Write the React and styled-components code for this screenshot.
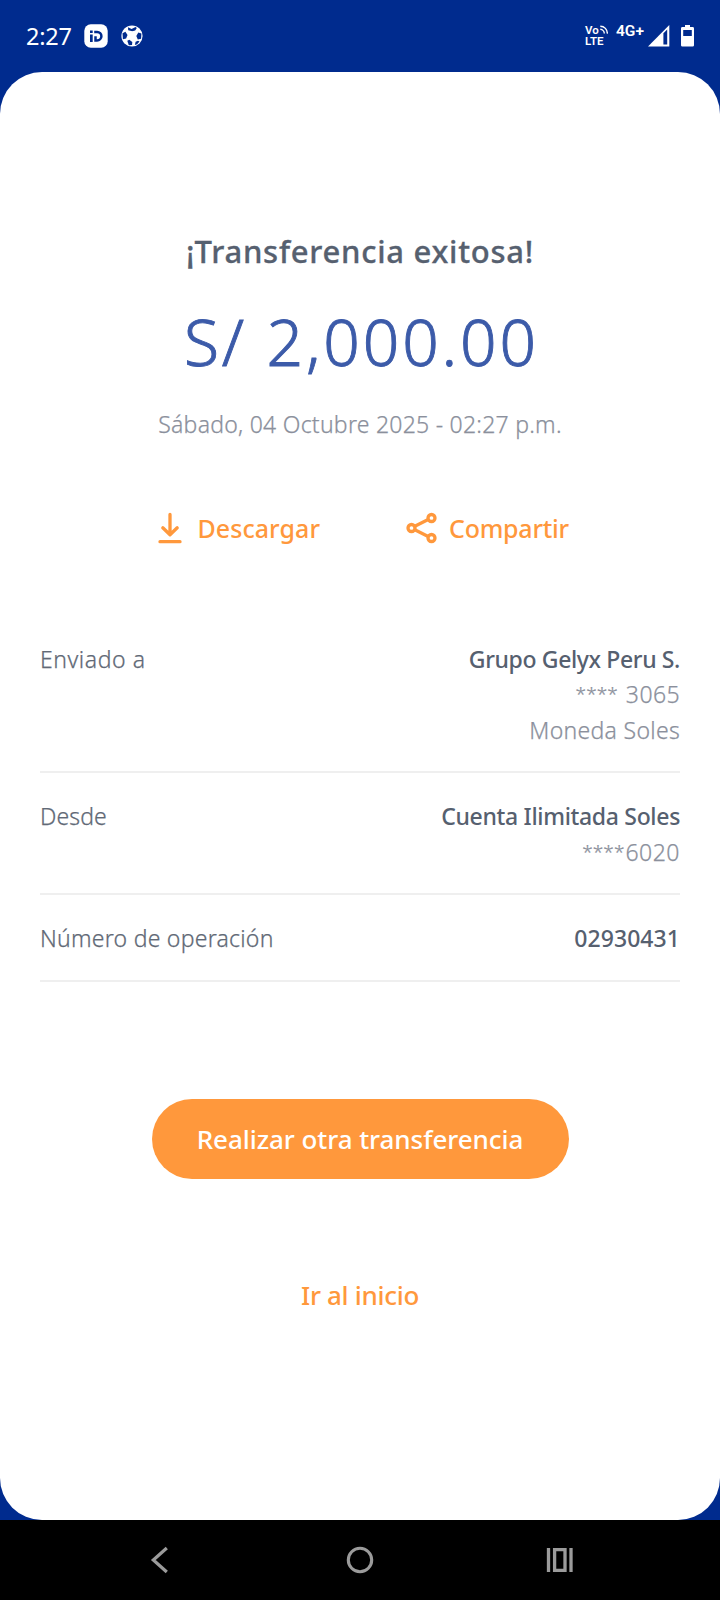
import React from 'react';
import styled, { createGlobalStyle } from 'styled-components';

const details = [
  {
    label: 'Enviado a',
    labelSpacing: 0.55,
    title: 'Grupo Gelyx Peru S.',
    titleSpacing: -0.37,
    lines: [
      { mask: '****', space: 8, text: '3065', spacing: 0.4 },
      { text: 'Moneda Soles', spacing: 0.3 }
    ]
  },
  {
    label: 'Desde',
    labelSpacing: 0.1,
    title: 'Cuenta Ilimitada Soles',
    titleSpacing: -0.32,
    lines: [{ mask: '****', space: 1, text: '6020', spacing: 0.5 }]
  },
  {
    label: 'Número de operación',
    labelSpacing: 0.25,
    title: '02930431',
    titleSpacing: 0.05,
    lines: []
  }
]

const DigitalIcon = () => (
  <svg width="24" height="24" viewBox="0 0 24 24">
    <rect x="0.3" y="0.3" width="23.4" height="23.4" rx="6.5" fill="#fff" />
    <path d="M6 6.6h2.7v2.3H6zM6 10.5h2.7V18H6z" fill="#002b8e" />
    <path
      d="M10.2 7.9h2.9a4.2 4.2 0 0 1 0 8.6h-1.6v-4.3"
      fill="none"
      stroke="#002b8e"
      strokeWidth="2.5"
    />
  </svg>
)

const BallIcon = () => (
  <svg width="22" height="22" viewBox="0 0 22 22">
    <circle cx="11" cy="11" r="10.6" fill="#fff" />
    <g fill="#002b8e">
      <path d="M7 2.2 10.6 4l3.9-1.9 1.3.8-1.6 2.5-2.9.8-4.1-.9z" />
      <path d="m1.5 8.3 2.9-1.5 2.1 3.2-1.4 3.6-3.2.6z" />
      <path d="m20.4 8.6-3.1-1-2 3.3 1.5 3.7 3.3-.8z" />
      <path d="m6.3 15.7 2-1 3 2.2-.3 3.2-3.2.2z" />
      <path d="m14.6 16.7 2.4-1 1.5.8-2.3 2.7-2.3.7z" />
    </g>
    <path d="m7.6 8.6 3.7-2.1 3.7 2.7-1 4.7-4.9.5-2.2-2.8z" fill="#fff" />
  </svg>
)

const WavesIcon = () => (
  <svg width="8" height="9" viewBox="0 0 8 9" fill="none" stroke="#fff" strokeWidth="1.4">
    <path d="M.3 1.2A7 7 0 0 1 7.3 8.6M.3 4.3a4.2 4.2 0 0 1 4 4.3" />
  </svg>
)

const SignalIcon = () => (
  <svg width="22" height="22" viewBox="0 0 22 22">
    <path d="M0 21.5 21.3 0v21.5z" fill="#fff" />
    <path d="M15.4 8.3 19.2 4.6v15h-3.8z" fill="#002b8e" />
  </svg>
)

const BatteryIcon = () => (
  <svg width="13" height="22" viewBox="0 0 13 22">
    <path
      d="M4 0h5v2h2.6Q13 2 13 3.4v16.8q0 1.4-1.4 1.4H1.4Q0 21.6 0 20.2V3.4Q0 2 1.4 2H4z"
      fill="#fff"
    />
    <path d="M2.2 5h8.6v6H2.2z" fill="#002b8e" />
  </svg>
)

const DownloadIcon = () => (
  <svg
    width="24" height="32" viewBox="0 0 24 32"
    fill="none" stroke="#ff983c" strokeWidth="3.3" strokeLinecap="round" strokeLinejoin="round"
  >
    <path d="M12 2.5v20M4.8 15.8l7.2 7 7.2-7M2 29.7h20" />
  </svg>
)

const ShareIcon = () => (
  <svg width="32" height="32" viewBox="0 0 32 32" fill="none" stroke="#ff983c" strokeWidth="3.3">
    <circle cx="5.5" cy="16" r="3.5" />
    <circle cx="25.5" cy="6" r="3.5" />
    <circle cx="25.5" cy="26" r="3.5" />
    <path d="m8.8 14.3 13.4-6.7M8.8 17.7l13.4 6.7" />
  </svg>
)

const App = () => {
  return (
    <Screen>
      <GlobalStyle />
      <StatusBar>
        <StatusGroup>
          <Clock>2:27</Clock>
          <DigitalIcon />
          <Ball>
            <BallIcon />
          </Ball>
        </StatusGroup>
        <StatusGroup>
          <Volte>
            <VolteTop>
              Vo
              <WavesIcon />
            </VolteTop>
            <span>LTE</span>
          </Volte>
          <Network>4G+</Network>
          <SignalIcon />
          <Battery>
            <BatteryIcon />
          </Battery>
        </StatusGroup>
      </StatusBar>
      <Card>
        <Title>¡Transferencia exitosa!</Title>
        <Amount>S/ 2,000.00</Amount>
        <DateText>Sábado, 04 Octubre 2025 - 02:27 p.m.</DateText>
        <Actions>
          <Action>
            <DownloadIcon />
            <ActionLabel $gap={15.5} $spacing={0.05}>Descargar</ActionLabel>
          </Action>
          <Action>
            <ShareIcon />
            <ActionLabel $gap={11} $spacing={-0.25}>Compartir</ActionLabel>
          </Action>
        </Actions>
        <Details>
          {details.map(({ label, labelSpacing, title, titleSpacing, lines }) => (
            <Row key={label}>
              <Label $spacing={labelSpacing}>{label}</Label>
              <Values>
                <ValueTitle $spacing={titleSpacing}>{title}</ValueTitle>
                {lines.map(({ mask, space, text, spacing }) => (
                  <ValueLine key={text} $spacing={spacing}>
                    {mask && <Mask $space={space}>{mask}</Mask>}
                    {text}
                  </ValueLine>
                ))}
              </Values>
            </Row>
          ))}
        </Details>
        <PrimaryButton>Realizar otra transferencia</PrimaryButton>
        <LinkButton>Ir al inicio</LinkButton>
      </Card>
      <NavBar>
        <NavButton>
          <svg width="30" height="30" viewBox="0 0 30 30" fill="none" stroke="#9b9b9b" strokeWidth="3.2">
            <path d="M21.8 3 8.3 15l13.5 12" />
          </svg>
        </NavButton>
        <NavButton>
          <svg width="30" height="30" viewBox="0 0 30 30" fill="none" stroke="#9b9b9b" strokeWidth="3.1">
            <circle cx="15" cy="15" r="11.7" />
          </svg>
        </NavButton>
        <NavButton>
          <svg width="30" height="30" viewBox="0 0 30 30" fill="none" stroke="#9b9b9b" strokeWidth="3.3">
            <path d="M3.5 3v24M26 3v24M9.6 4.7h10.4v20.6H9.6z" />
          </svg>
        </NavButton>
      </NavBar>
    </Screen>
  )
}

export default App

const GlobalStyle = createGlobalStyle`
  * {
    box-sizing: border-box;
  }
  body {
    margin: 0;
    font-family: 'Noto Sans', 'Open Sans', sans-serif;
  }
  h1, p {
    margin: 0;
  }
  button {
    padding: 0;
    border: none;
    background: none;
    font-family: inherit;
  }
  svg {
    display: block;
    flex-shrink: 0;
  }
`
const Screen = styled.div`
  display: flex;
  flex-direction: column;
  width: 720px;
  height: 1600px;
  background-color: #002b8e;
  overflow: hidden;
`
const StatusBar = styled.header`
  display: flex;
  align-items: center;
  justify-content: space-between;
  height: 72px;
  padding: 0 26px;
  color: #fff;
`
const StatusGroup = styled.div`
  display: flex;
  align-items: center;
`
const Clock = styled.span`
  width: 58px;
  font-size: 23.5px;
  line-height: 32px;
  letter-spacing: -0.2px;
`
const Ball = styled.div`
  margin-left: 13px;
`
const Volte = styled.div`
  display: flex;
  flex-direction: column;
  width: 31px;
  font-family: Roboto, sans-serif;
  font-size: 11.5px;
  font-weight: 600;
  line-height: 11px;
`
const VolteTop = styled.div`
  display: flex;
  gap: 1px;
`
const Network = styled.span`
  width: 32px;
  margin-bottom: 10px;
  font-family: Roboto, sans-serif;
  font-size: 15.5px;
  font-weight: 600;
  line-height: 16px;
`
const Battery = styled.div`
  margin-left: 11px;
`
const Card = styled.main`
  display: flex;
  flex-direction: column;
  align-items: center;
  height: 1448px;
  padding: 157px 40px 0;
  border-radius: 42px;
  background-color: #fff;
`
const Title = styled.h1`
  color: #56606f;
  font-size: 31px;
  font-weight: 500;
  line-height: 44px;
  letter-spacing: 0.75px;
  white-space: nowrap;
  -webkit-text-stroke: 0.3px;
`
const Amount = styled.p`
  margin: 25px -3px 0 0;
  color: #3c5ba9;
  font-size: 64px;
  font-weight: 300;
  line-height: 88px;
  letter-spacing: 2.9px;
  white-space: nowrap;
  -webkit-text-stroke: 0.9px;
`
const DateText = styled.p`
  margin-top: 22px;
  color: #8b909c;
  font-size: 23px;
  font-weight: 300;
  line-height: 32px;
  letter-spacing: 0.25px;
  white-space: nowrap;
  -webkit-text-stroke: 0.25px;
`
const Actions = styled.div`
  display: flex;
  width: 100%;
  height: 40px;
  margin-top: 68px;
  padding-left: 118px;
`
const Action = styled.button`
  display: flex;
  align-items: center;
  width: 248px;
`
const ActionLabel = styled.span`
  margin-left: ${({ $gap }) => $gap}px;
  color: #ff983c;
  font-size: 25px;
  font-weight: 500;
  letter-spacing: ${({ $spacing }) => $spacing}px;
`
const Details = styled.div`
  width: 100%;
  margin-top: 67.5px;
`
const Row = styled.div`
  display: flex;
  justify-content: space-between;
  padding: 26px 0 23px;
  border-bottom: 2px solid #efefef;
  font-size: 23px;
  line-height: 35.5px;
  white-space: nowrap;
`
const Label = styled.span`
  color: #616976;
  font-weight: 300;
  letter-spacing: ${({ $spacing }) => $spacing}px;
  -webkit-text-stroke: 0.25px;
`
const Values = styled.div`
  display: flex;
  flex-direction: column;
  align-items: flex-end;
`
const ValueTitle = styled.span`
  color: #56606f;
  font-weight: 500;
  letter-spacing: ${({ $spacing }) => $spacing}px;
`
const ValueLine = styled.span`
  color: #8b909c;
  font-weight: 300;
  letter-spacing: ${({ $spacing }) => $spacing}px;
  -webkit-text-stroke: 0.25px;
`
const Mask = styled.span`
  margin-right: ${({ $space }) => $space}px;
  font-size: 19px;
  line-height: 0;
  letter-spacing: 0.1px;
  vertical-align: 2px;
`
const PrimaryButton = styled.button`
  width: 417px;
  height: 80px;
  margin-top: 117px;
  border-radius: 40px;
  color: #fff;
  background-color: #ff983c;
  font-size: 26px;
  font-weight: 500;
  letter-spacing: -0.05px;
  white-space: nowrap;
`
const LinkButton = styled.button`
  height: 40px;
  margin-top: 96px;
  color: #ff983c;
  font-size: 26px;
  font-weight: 500;
  letter-spacing: -0.3px;
`
const NavBar = styled.nav`
  display: flex;
  align-items: center;
  justify-content: space-between;
  height: 80px;
  padding: 0 145px;
  background-color: #000;
`
const NavButton = styled.button`
  width: 30px;
  height: 30px;
`
